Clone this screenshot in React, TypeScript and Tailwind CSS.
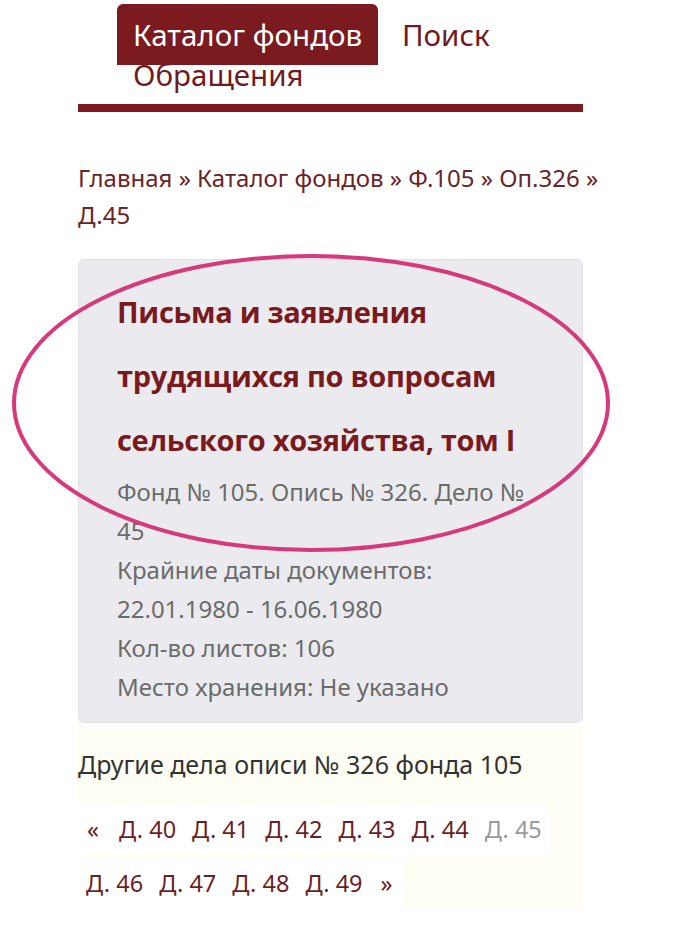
import React from 'react';

const pages = ['Д. 40', 'Д. 41', 'Д. 42', 'Д. 43', 'Д. 44', 'Д. 45', 'Д. 46', 'Д. 47', 'Д. 48', 'Д. 49'];

export default function App() {
  return (
    <div className="relative min-h-[925px] bg-white font-['Noto_Sans',sans-serif]">
      <div className="mx-[78px] w-[505px]">
        {/* top menu */}
        <nav className="pt-[15px] pl-[39px] text-[29.5px] leading-[40px] text-[#6e1c21]">
          <span className="inline-block rounded-t-md bg-[#7b1b1f] px-4 pt-[12px] pb-[11px] -mt-[12px] -mb-[11px] text-white leading-[38px]">
            Каталог фондов
          </span>{' '}
          <span className="px-4">Поиск</span>{' '}
          <span className="px-4">Обращения</span>
        </nav>
        <div className="mt-[9px] h-[8px] bg-[#7b1b1f]" />

        {/* breadcrumbs */}
        <div className="mt-[47px] w-[540px] text-[24px] leading-[37px] text-[#6a2428]">
          Главная » Каталог фондов » Ф.105 » Оп.326 » Д.45
        </div>

        {/* card */}
        <div className="mt-[26px] rounded-md border border-[#e2e2e6] bg-[#ebebef] px-[38px] pt-[20px] pb-[16px]">
          <h1 className="font-['Open_Sans',sans-serif] text-[29px] font-bold leading-[64px] tracking-[-0.3px] text-[#7a1a1e]">
            Письма и заявления трудящихся по вопросам сельского хозяйства, том I
          </h1>
          <div className="text-[24px] leading-[39px] text-[#6b6b6b]">
            <p>Фонд № 105. Опись № 326. Дело № 45</p>
            <p>Крайние даты документов: 22.01.1980 - 16.06.1980</p>
            <p>Кол-во листов: 106</p>
            <p>Место хранения: Не указано</p>
          </div>
        </div>

        {/* other cases */}
        <div className="mt-[2px] bg-[#fffef4] pt-[20px]">
          <div className="text-[25px] leading-[39px] text-[#333]">Другие дела описи № 326 фонда 105</div>
          <div className="mt-[20px] flex flex-wrap gap-y-[3px] text-[23.5px] text-[#6b1f24]">
            <span className="flex h-[51px] items-center bg-white pl-[9px] pr-[12px]">«</span>
            {pages.map((p) => (
              <span
                key={p}
                className={`flex h-[51px] items-center bg-white px-[8px] ${p === 'Д. 45' ? 'text-[#9a9a9a]' : ''}`}
              >
                {p}
              </span>
            ))}
            <span className="flex h-[51px] items-center bg-white px-[10px]">»</span>
          </div>
        </div>
      </div>

      {/* annotation ellipse */}
      <svg className="pointer-events-none absolute left-0 top-0" width="700" height="925">
        <ellipse cx="311" cy="403" rx="297" ry="147" fill="none" stroke="#d63a7a" strokeWidth="4" />
      </svg>
    </div>
  );
}
